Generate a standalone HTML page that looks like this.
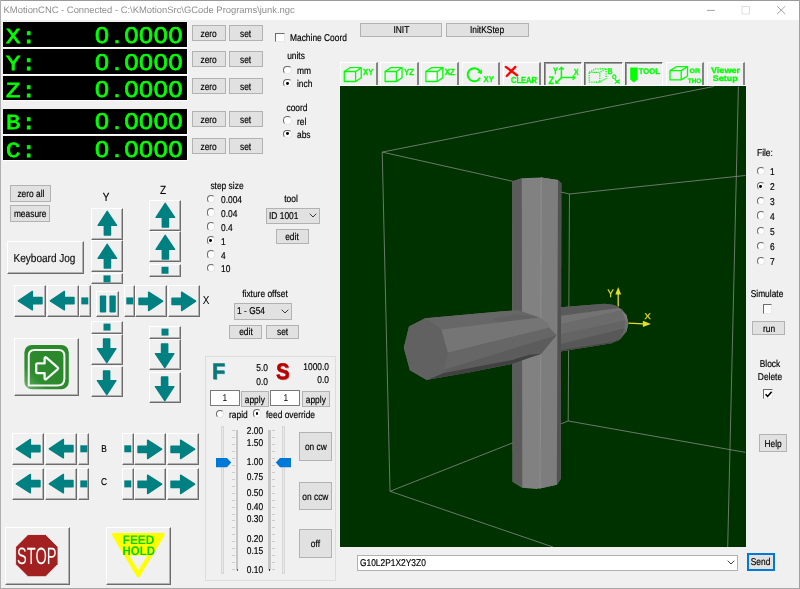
<!DOCTYPE html>
<html><head><meta charset="utf-8"><title>KMotionCNC</title>
<style>
html,body{margin:0;padding:0;background:#f0f0f0;}
body{width:800px;height:589px;overflow:hidden;background:#f0f0f0;position:relative;font-family:"Liberation Sans",sans-serif;font-size:8.4px;text-rendering:geometricPrecision;}
#w div{position:absolute;box-sizing:border-box;}
#w{position:absolute;left:0;top:0;width:800px;height:589px;overflow:hidden;will-change:transform;}
.t{white-space:pre;-webkit-text-stroke:0.18px currentColor;}
.b{background:#e1e1e1;border:1px solid #b2b2b2;text-align:center;white-space:pre;color:#000;-webkit-text-stroke:0.18px #000;}
.r{width:8.6px;height:8.6px;border-radius:50%;background:#fff;border:1px solid #e6e6e6;border-top-color:#6a6a6a;border-left-color:#6a6a6a;transform:rotate(0deg);}
.r i{position:absolute;left:1.9px;top:1.9px;width:2.8px;height:2.8px;border-radius:50%;background:#000;display:block;}
.c{width:9.6px;height:9.6px;background:#fff;border:1px solid #e8e8e8;border-top:1.3px solid #6c6c6c;border-left:1.3px solid #6c6c6c;}
.rb{background:#f0f0f0;border-top:1px solid #fff;border-left:1px solid #fff;border-right:1px solid #6c6c6c;border-bottom:1px solid #6c6c6c;box-shadow:inset -1px -1px 0 #b2b2b2;}
.sb{background:#f0f0f0;border-top:1px solid #6c6c6c;border-left:1px solid #6c6c6c;border-right:1px solid #fff;border-bottom:1px solid #fff;box-shadow:inset 1px 1px 0 #b2b2b2;}
.dro{background:#000;color:#00ff00;font-family:"Liberation Mono",monospace;font-weight:normal;-webkit-text-stroke:0.8px #00ff00;font-size:22.8px;letter-spacing:0.92px;white-space:pre;border-right:1px solid #fff;border-bottom:1px solid #fff;}
.num{position:absolute;left:91.9px;top:-1.3px;font-family:"Liberation Sans",sans-serif;font-size:22.4px;letter-spacing:0.67px;-webkit-text-stroke:0.7px #00ff00;transform:scale(1.12,1.02);transform-origin:0 100%;line-height:29.2px;}
.num span{display:inline-block;width:13.12px;text-align:center;letter-spacing:0;}
.s{display:inline-block;transform:scaleX(0.85);transform-origin:50% 50%;white-space:pre;}
.sl{display:inline-block;transform:scaleX(0.85);transform-origin:0 50%;white-space:pre;}
.ed{background:#fff;border:1px solid #7a7a7a;text-align:center;}
</style></head><body><div id="w">
<div style="left:0px;top:0px;width:800px;height:20px;background:#fff;"></div>
<div class="t" style="left:3.6px;top:3.6000000000000014px;line-height:12px;font-size:9.42px;color:#8e8e8e;transform-origin:0 50%;-webkit-text-stroke:0;">KMotionCNC - Connected - C:\KMotionSrc\GCode Programs\junk.ngc</div>
<svg width="100" height="20" viewBox="0 0 100 20" style="position:absolute;left:700px;top:0"><path d="M6.9 10.4 H14.8" stroke="#8c8c8c" stroke-width="0.8"/><rect x="42" y="6.5" width="7.5" height="7.5" fill="none" stroke="#d8d8d8" stroke-width="0.8"/><path d="M77.2 6.2 L85.2 14 M85.2 6.2 L77.2 14" stroke="#8a8a8a" stroke-width="0.8"/></svg>
<div class="dro" style="left:3px;top:22.3px;width:185px;height:25.599999999999998px;line-height:29.2px"><span style="position:absolute;left:3px;top:1.5px;font-size:21.4px;transform:scaleX(1.12);transform-origin:0 0">X:</span><span class="num">0<span>.</span>0000</span></div>
<div class="dro" style="left:3px;top:49.3px;width:185px;height:25.60000000000001px;line-height:29.2px"><span style="position:absolute;left:3px;top:1.5px;font-size:21.4px;transform:scaleX(1.12);transform-origin:0 0">Y:</span><span class="num">0<span>.</span>0000</span></div>
<div class="dro" style="left:3px;top:76.1px;width:185px;height:25.30000000000001px;line-height:29.2px"><span style="position:absolute;left:3px;top:1.5px;font-size:21.4px;transform:scaleX(1.12);transform-origin:0 0">Z:</span><span class="num">0<span>.</span>0000</span></div>
<div class="dro" style="left:3px;top:108.7px;width:185px;height:26.200000000000003px;line-height:29.2px"><span style="position:absolute;left:3px;top:1.5px;font-size:21.4px;transform:scaleX(1.12);transform-origin:0 0">B:</span><span class="num">0<span>.</span>0000</span></div>
<div class="dro" style="left:3px;top:136.1px;width:185px;height:24.900000000000006px;line-height:29.2px"><span style="position:absolute;left:3px;top:1.5px;font-size:21.4px;transform:scaleX(1.12);transform-origin:0 0">C:</span><span class="num">0<span>.</span>0000</span></div>
<div class="b" style="left:192px;top:25px;width:33.5px;height:16px;line-height:17.6px;font-size:9.88px;"><span class="s">zero</span></div>
<div class="b" style="left:229.3px;top:25px;width:33.5px;height:16px;line-height:17.6px;font-size:9.88px;"><span class="s">set</span></div>
<div class="b" style="left:192px;top:51.3px;width:33.5px;height:16px;line-height:17.6px;font-size:9.88px;"><span class="s">zero</span></div>
<div class="b" style="left:229.3px;top:51.3px;width:33.5px;height:16px;line-height:17.6px;font-size:9.88px;"><span class="s">set</span></div>
<div class="b" style="left:192px;top:78px;width:33.5px;height:16px;line-height:17.6px;font-size:9.88px;"><span class="s">zero</span></div>
<div class="b" style="left:229.3px;top:78px;width:33.5px;height:16px;line-height:17.6px;font-size:9.88px;"><span class="s">set</span></div>
<div class="b" style="left:192px;top:111.3px;width:33.5px;height:16px;line-height:17.6px;font-size:9.88px;"><span class="s">zero</span></div>
<div class="b" style="left:229.3px;top:111.3px;width:33.5px;height:16px;line-height:17.6px;font-size:9.88px;"><span class="s">set</span></div>
<div class="b" style="left:192px;top:138.3px;width:33.5px;height:16px;line-height:17.6px;font-size:9.88px;"><span class="s">zero</span></div>
<div class="b" style="left:229.3px;top:138.3px;width:33.5px;height:16px;line-height:17.6px;font-size:9.88px;"><span class="s">set</span></div>
<div class="c" style="left:275.2px;top:32.5px"></div>
<div class="t" style="left:289.5px;top:32.599999999999994px;line-height:12px;font-size:9.88px;color:#000;transform-origin:0 50%;transform:scaleX(0.85);">Machine Coord</div>
<div class="t" style="left:195.5px;width:200px;text-align:center;top:51.3px;line-height:12px;font-size:9.88px;color:#000;transform-origin:50% 50%;transform:scaleX(0.85);">units</div>
<div class="r" style="left:283.2px;top:65.7px"></div>
<div class="t" style="left:297px;top:66.1px;line-height:12px;font-size:9.88px;color:#000;transform-origin:0 50%;transform:scaleX(0.85);">mm</div>
<div class="r" style="left:283.2px;top:78.9px"><i></i></div>
<div class="t" style="left:297px;top:79.39999999999999px;line-height:12px;font-size:9.88px;color:#000;transform-origin:0 50%;transform:scaleX(0.85);">inch</div>
<div class="t" style="left:196.8px;width:200px;text-align:center;top:102.6px;line-height:12px;font-size:9.88px;color:#000;transform-origin:50% 50%;transform:scaleX(0.85);">coord</div>
<div class="r" style="left:283.2px;top:116.2px"></div>
<div class="t" style="left:297px;top:116.6px;line-height:12px;font-size:9.88px;color:#000;transform-origin:0 50%;transform:scaleX(0.85);">rel</div>
<div class="r" style="left:283.2px;top:129.5px"><i></i></div>
<div class="t" style="left:297px;top:129.9px;line-height:12px;font-size:9.88px;color:#000;transform-origin:0 50%;transform:scaleX(0.85);">abs</div>
<div class="b" style="left:360px;top:23.2px;width:82.4px;height:13.8px;line-height:14.6px;font-size:9.88px;"><span class="s">INIT</span></div>
<div class="b" style="left:446.3px;top:23.2px;width:82.3px;height:13.8px;line-height:14.6px;font-size:9.88px;"><span class="s">InitKStep</span></div>
<div class="b" style="left:10px;top:185px;width:41px;height:16.5px;line-height:18.1px;font-size:9.88px;"><span class="s">zero all</span></div>
<div class="b" style="left:10px;top:205px;width:40px;height:16.8px;line-height:18.400000000000002px;font-size:9.88px;"><span class="s">measure</span></div>
<div class="rb" style="left:7px;top:241px;width:76.8px;height:33px"><div class="t" style="left:-1.2px;top:0.7px;width:75px;height:31px;line-height:31px;text-align:center;font-size:11.6px;color:#111;transform:scaleX(0.865)">Keyboard Jog</div></div>
<div class="t" style="left:6px;width:200px;text-align:center;top:192.3px;line-height:12px;font-size:11.76px;color:#000;transform-origin:50% 50%;transform:scaleX(0.85);">Y</div>
<div class="t" style="left:62.80000000000001px;width:200px;text-align:center;top:185.0px;line-height:12px;font-size:11.76px;color:#000;transform-origin:50% 50%;transform:scaleX(0.85);">Z</div>
<div class="rb" style="left:91px;top:207.5px;width:32px;height:32px"><svg width="30" height="30" viewBox="0 0 30 30" style="position:absolute;left:0.0px;top:-0.2px;overflow:visible"><g transform="rotate(0 15 15)"><path d="M15.2 3.3 L24.6 17.4 L18.5 17.4 L18.5 27 L12.3 27 L12.3 17.4 L6.1 17.4 Z" fill="#008080" stroke="#008080" stroke-width="1.4" stroke-linejoin="round"/></g></svg></div>
<div class="rb" style="left:91px;top:240.4px;width:32px;height:31.6px"><svg width="30" height="30" viewBox="0 0 30 30" style="position:absolute;left:0.0px;top:-0.4px;overflow:visible"><g transform="rotate(0 15 15)"><path d="M15.2 3.3 L24.6 17.4 L18.5 17.4 L18.5 27 L12.3 27 L12.3 17.4 L6.1 17.4 Z" fill="#008080" stroke="#008080" stroke-width="1.4" stroke-linejoin="round"/></g></svg></div>
<div class="rb" style="left:91px;top:272.5px;width:32px;height:11.8px"><svg width="30" height="9.8" viewBox="0 0 30 9.8" style="position:absolute;left:0;top:0"><rect x="11.5" y="1.4000000000000004" width="7" height="7" fill="#008080"/></svg></div>
<div class="rb" style="left:91px;top:321.4px;width:32px;height:12.2px"><svg width="30" height="10.2" viewBox="0 0 30 10.2" style="position:absolute;left:0;top:0"><rect x="11.5" y="1.5999999999999996" width="7" height="7" fill="#008080"/></svg></div>
<div class="rb" style="left:91px;top:334.4px;width:32px;height:30.6px"><svg width="30" height="30" viewBox="0 0 30 30" style="position:absolute;left:0.0px;top:0.7px;overflow:visible"><g transform="rotate(180 15 15)"><path d="M15.2 3.3 L24.6 17.4 L18.5 17.4 L18.5 27 L12.3 27 L12.3 17.4 L6.1 17.4 Z" fill="#008080" stroke="#008080" stroke-width="1.4" stroke-linejoin="round"/></g></svg></div>
<div class="rb" style="left:91px;top:365.8px;width:32px;height:31.4px"><svg width="30" height="30" viewBox="0 0 30 30" style="position:absolute;left:0.0px;top:1.1px;overflow:visible"><g transform="rotate(180 15 15)"><path d="M15.2 3.3 L24.6 17.4 L18.5 17.4 L18.5 27 L12.3 27 L12.3 17.4 L6.1 17.4 Z" fill="#008080" stroke="#008080" stroke-width="1.4" stroke-linejoin="round"/></g></svg></div>
<div class="rb" style="left:149px;top:200.3px;width:32px;height:30.5px"><svg width="30" height="30" viewBox="0 0 30 30" style="position:absolute;left:0.0px;top:-0.95px;overflow:visible"><g transform="rotate(0 15 15)"><path d="M15.2 3.3 L24.6 17.4 L18.5 17.4 L18.5 27 L12.3 27 L12.3 17.4 L6.1 17.4 Z" fill="#008080" stroke="#008080" stroke-width="1.4" stroke-linejoin="round"/></g></svg></div>
<div class="rb" style="left:149px;top:231.2px;width:32px;height:31px"><svg width="30" height="30" viewBox="0 0 30 30" style="position:absolute;left:0.0px;top:-0.7px;overflow:visible"><g transform="rotate(0 15 15)"><path d="M15.2 3.3 L24.6 17.4 L18.5 17.4 L18.5 27 L12.3 27 L12.3 17.4 L6.1 17.4 Z" fill="#008080" stroke="#008080" stroke-width="1.4" stroke-linejoin="round"/></g></svg></div>
<div class="rb" style="left:149px;top:264px;width:32px;height:12.5px"><svg width="30" height="10.5" viewBox="0 0 30 10.5" style="position:absolute;left:0;top:0"><rect x="11.5" y="1.75" width="7" height="7" fill="#008080"/></svg></div>
<div class="rb" style="left:149px;top:326.4px;width:32px;height:12.2px"><svg width="30" height="10.2" viewBox="0 0 30 10.2" style="position:absolute;left:0;top:0"><rect x="11.5" y="1.5999999999999996" width="7" height="7" fill="#008080"/></svg></div>
<div class="rb" style="left:149px;top:339.4px;width:32px;height:31px"><svg width="30" height="30" viewBox="0 0 30 30" style="position:absolute;left:0.0px;top:0.9px;overflow:visible"><g transform="rotate(180 15 15)"><path d="M15.2 3.3 L24.6 17.4 L18.5 17.4 L18.5 27 L12.3 27 L12.3 17.4 L6.1 17.4 Z" fill="#008080" stroke="#008080" stroke-width="1.4" stroke-linejoin="round"/></g></svg></div>
<div class="rb" style="left:149px;top:371.8px;width:32px;height:31.4px"><svg width="30" height="30" viewBox="0 0 30 30" style="position:absolute;left:0.0px;top:1.1px;overflow:visible"><g transform="rotate(180 15 15)"><path d="M15.2 3.3 L24.6 17.4 L18.5 17.4 L18.5 27 L12.3 27 L12.3 17.4 L6.1 17.4 Z" fill="#008080" stroke="#008080" stroke-width="1.4" stroke-linejoin="round"/></g></svg></div>
<div class="rb" style="left:14px;top:285px;width:32px;height:31.8px"><svg width="30" height="30" viewBox="0 0 30 30" style="position:absolute;left:-0.4px;top:-0.1px;overflow:visible"><g transform="rotate(-90 15 15)"><path d="M15.2 3.3 L24.6 17.4 L18.5 17.4 L18.5 27 L12.3 27 L12.3 17.4 L6.1 17.4 Z" fill="#008080" stroke="#008080" stroke-width="1.4" stroke-linejoin="round"/></g></svg></div>
<div class="rb" style="left:46.7px;top:285px;width:32px;height:31.8px"><svg width="30" height="30" viewBox="0 0 30 30" style="position:absolute;left:-0.4px;top:-0.1px;overflow:visible"><g transform="rotate(-90 15 15)"><path d="M15.2 3.3 L24.6 17.4 L18.5 17.4 L18.5 27 L12.3 27 L12.3 17.4 L6.1 17.4 Z" fill="#008080" stroke="#008080" stroke-width="1.4" stroke-linejoin="round"/></g></svg></div>
<div class="rb" style="left:79.3px;top:285px;width:11.6px;height:31.8px"><svg width="9.6" height="29.8" viewBox="0 0 9.6 29.8" style="position:absolute;left:0;top:0"><rect x="1.2999999999999998" y="11.4" width="7" height="7" fill="#008080"/></svg></div>
<div class="rb" style="left:123.7px;top:285px;width:11.6px;height:31.8px"><svg width="9.6" height="29.8" viewBox="0 0 9.6 29.8" style="position:absolute;left:0;top:0"><rect x="1.2999999999999998" y="11.4" width="7" height="7" fill="#008080"/></svg></div>
<div class="rb" style="left:135.4px;top:285px;width:32px;height:31.8px"><svg width="30" height="30" viewBox="0 0 30 30" style="position:absolute;left:0.0px;top:-0.1px;overflow:visible"><g transform="rotate(90 15 15)"><path d="M15.2 3.3 L24.6 17.4 L18.5 17.4 L18.5 27 L12.3 27 L12.3 17.4 L6.1 17.4 Z" fill="#008080" stroke="#008080" stroke-width="1.4" stroke-linejoin="round"/></g></svg></div>
<div class="rb" style="left:167.8px;top:285px;width:32px;height:31.8px"><svg width="30" height="30" viewBox="0 0 30 30" style="position:absolute;left:0.0px;top:-0.1px;overflow:visible"><g transform="rotate(90 15 15)"><path d="M15.2 3.3 L24.6 17.4 L18.5 17.4 L18.5 27 L12.3 27 L12.3 17.4 L6.1 17.4 Z" fill="#008080" stroke="#008080" stroke-width="1.4" stroke-linejoin="round"/></g></svg></div>
<div class="rb" style="left:95.6px;top:290.6px;width:23.4px;height:26px"><svg width="23" height="24" viewBox="0 0 23 24" style="position:absolute;left:0;top:0"><rect x="2.8" y="3.4" width="6.4" height="17" rx="0.8" fill="#008080"/><rect x="12.4" y="3.4" width="6.4" height="17" rx="0.8" fill="#008080"/></svg></div>
<div class="t" style="left:105.6px;width:200px;text-align:center;top:294.6px;line-height:12px;font-size:11.76px;color:#000;transform-origin:50% 50%;transform:scaleX(0.85);-webkit-text-stroke:0;">X</div>
<div class="rb" style="left:12px;top:433.2px;width:32px;height:31.6px"><svg width="30" height="30" viewBox="0 0 30 30" style="position:absolute;left:-0.4px;top:-0.2px;overflow:visible"><g transform="rotate(-90 15 15)"><path d="M15.2 3.3 L24.6 17.4 L18.5 17.4 L18.5 27 L12.3 27 L12.3 17.4 L6.1 17.4 Z" fill="#008080" stroke="#008080" stroke-width="1.4" stroke-linejoin="round"/></g></svg></div>
<div class="rb" style="left:45px;top:433.2px;width:32px;height:31.6px"><svg width="30" height="30" viewBox="0 0 30 30" style="position:absolute;left:-0.4px;top:-0.2px;overflow:visible"><g transform="rotate(-90 15 15)"><path d="M15.2 3.3 L24.6 17.4 L18.5 17.4 L18.5 27 L12.3 27 L12.3 17.4 L6.1 17.4 Z" fill="#008080" stroke="#008080" stroke-width="1.4" stroke-linejoin="round"/></g></svg></div>
<div class="rb" style="left:77.5px;top:433.2px;width:11.6px;height:31.6px"><svg width="9.6" height="29.6" viewBox="0 0 9.6 29.6" style="position:absolute;left:0;top:0"><rect x="1.2999999999999998" y="11.3" width="7" height="7" fill="#008080"/></svg></div>
<div class="rb" style="left:122.3px;top:433.2px;width:11.6px;height:31.6px"><svg width="9.6" height="29.6" viewBox="0 0 9.6 29.6" style="position:absolute;left:0;top:0"><rect x="1.2999999999999998" y="11.3" width="7" height="7" fill="#008080"/></svg></div>
<div class="rb" style="left:134px;top:433.2px;width:32px;height:31.6px"><svg width="30" height="30" viewBox="0 0 30 30" style="position:absolute;left:0.0px;top:-0.2px;overflow:visible"><g transform="rotate(90 15 15)"><path d="M15.2 3.3 L24.6 17.4 L18.5 17.4 L18.5 27 L12.3 27 L12.3 17.4 L6.1 17.4 Z" fill="#008080" stroke="#008080" stroke-width="1.4" stroke-linejoin="round"/></g></svg></div>
<div class="rb" style="left:166.5px;top:433.2px;width:32px;height:31.6px"><svg width="30" height="30" viewBox="0 0 30 30" style="position:absolute;left:0.0px;top:-0.2px;overflow:visible"><g transform="rotate(90 15 15)"><path d="M15.2 3.3 L24.6 17.4 L18.5 17.4 L18.5 27 L12.3 27 L12.3 17.4 L6.1 17.4 Z" fill="#008080" stroke="#008080" stroke-width="1.4" stroke-linejoin="round"/></g></svg></div>
<div class="rb" style="left:12px;top:467.9px;width:32px;height:31.8px"><svg width="30" height="30" viewBox="0 0 30 30" style="position:absolute;left:-0.4px;top:-0.1px;overflow:visible"><g transform="rotate(-90 15 15)"><path d="M15.2 3.3 L24.6 17.4 L18.5 17.4 L18.5 27 L12.3 27 L12.3 17.4 L6.1 17.4 Z" fill="#008080" stroke="#008080" stroke-width="1.4" stroke-linejoin="round"/></g></svg></div>
<div class="rb" style="left:45px;top:467.9px;width:32px;height:31.8px"><svg width="30" height="30" viewBox="0 0 30 30" style="position:absolute;left:-0.4px;top:-0.1px;overflow:visible"><g transform="rotate(-90 15 15)"><path d="M15.2 3.3 L24.6 17.4 L18.5 17.4 L18.5 27 L12.3 27 L12.3 17.4 L6.1 17.4 Z" fill="#008080" stroke="#008080" stroke-width="1.4" stroke-linejoin="round"/></g></svg></div>
<div class="rb" style="left:77.5px;top:467.9px;width:11.6px;height:31.8px"><svg width="9.6" height="29.8" viewBox="0 0 9.6 29.8" style="position:absolute;left:0;top:0"><rect x="1.2999999999999998" y="11.4" width="7" height="7" fill="#008080"/></svg></div>
<div class="rb" style="left:122.3px;top:467.9px;width:11.6px;height:31.8px"><svg width="9.6" height="29.8" viewBox="0 0 9.6 29.8" style="position:absolute;left:0;top:0"><rect x="1.2999999999999998" y="11.4" width="7" height="7" fill="#008080"/></svg></div>
<div class="rb" style="left:134px;top:467.9px;width:32px;height:31.8px"><svg width="30" height="30" viewBox="0 0 30 30" style="position:absolute;left:0.0px;top:-0.1px;overflow:visible"><g transform="rotate(90 15 15)"><path d="M15.2 3.3 L24.6 17.4 L18.5 17.4 L18.5 27 L12.3 27 L12.3 17.4 L6.1 17.4 Z" fill="#008080" stroke="#008080" stroke-width="1.4" stroke-linejoin="round"/></g></svg></div>
<div class="rb" style="left:166.5px;top:467.9px;width:32px;height:31.8px"><svg width="30" height="30" viewBox="0 0 30 30" style="position:absolute;left:0.0px;top:-0.1px;overflow:visible"><g transform="rotate(90 15 15)"><path d="M15.2 3.3 L24.6 17.4 L18.5 17.4 L18.5 27 L12.3 27 L12.3 17.4 L6.1 17.4 Z" fill="#008080" stroke="#008080" stroke-width="1.4" stroke-linejoin="round"/></g></svg></div>
<div class="t" style="left:4px;width:200px;text-align:center;top:443.6px;line-height:12px;font-size:9.88px;color:#000;transform-origin:50% 50%;transform:scaleX(0.85);">B</div>
<div class="t" style="left:4px;width:200px;text-align:center;top:476.8px;line-height:12px;font-size:9.88px;color:#000;transform-origin:50% 50%;transform:scaleX(0.85);">C</div>
<div class="rb" style="left:14px;top:337.5px;width:64.8px;height:58.6px"><svg width="63" height="57" viewBox="0 0 63 57" style="position:absolute;left:0;top:0">
<defs><linearGradient id="gg" x1="0" y1="1" x2="0.6" y2="0.4"><stop offset="0" stop-color="#6fb56f"/><stop offset="0.45" stop-color="#2f8c2f"/><stop offset="1" stop-color="#2a892a"/></linearGradient></defs>
<rect x="9.4" y="5.9" width="44.4" height="44.4" rx="7.5" fill="url(#gg)"/>
<path d="M19.5 10.9 H43.6 Q49.4 10.9 49.4 16.7 V39.5 Q49.4 46.5 42.4 46.5 H13.75 V16.7 Q13.75 10.9 19.5 10.9 Z" fill="none" stroke="#f6f6f6" stroke-width="2"/>
<path d="M22.2 24.4 H29.6 V19.2 Q29.9 17.6 31.4 18.6 L42.6 28.3 Q43.6 29.3 42.6 30.3 L31.4 40 Q29.9 41 29.6 39.4 V34.2 H22.2 Q21.2 34 21.2 33 V25.6 Q21.2 24.5 22.2 24.4 Z" fill="none" stroke="#f6f6f6" stroke-width="2.3" stroke-linejoin="round"/>
</svg></div>
<div class="rb" style="left:5.2px;top:526.7px;width:64.6px;height:58px"><svg width="64.6" height="58" viewBox="6.2 527.7 64.6 58" style="position:absolute;left:0;top:0"><polygon points="28.2,534.2 45.8,534.2 58.2,546.6 58.2,564 45.8,576.4 28.2,576.4 15.8,564 15.8,546.6" fill="#a32020" stroke="#f8f8f8" stroke-width="0.8"/>
<text x="17.3" y="563.3" font-family="Liberation Sans, sans-serif" font-size="23.5" fill="#fff" textLength="39.4" lengthAdjust="spacingAndGlyphs">STOP</text></svg></div>
<div class="rb" style="left:106.1px;top:526.7px;width:64.6px;height:58px"><svg width="64.6" height="58" viewBox="107.1 527.7 64.6 58" style="position:absolute;left:0;top:0"><path d="M113.6 534.4 H163.2 L138.4 575.6 Z" fill="#ffff00" stroke="#ffff00" stroke-width="3.2" stroke-linejoin="round"/>
<path d="M129.3 555.2 H147.5 L138.4 570 Z" fill="#f0f0f0"/>
<text x="122.8" y="543.9" font-family="Liberation Sans, sans-serif" font-weight="bold" font-size="12.4" fill="#00d400" textLength="31.6" lengthAdjust="spacingAndGlyphs">FEED</text>
<text x="122.6" y="554.9" font-family="Liberation Sans, sans-serif" font-weight="bold" font-size="12.4" fill="#00d400" textLength="32.4" lengthAdjust="spacingAndGlyphs">HOLD</text></svg></div>
<div class="t" style="left:127px;width:200px;text-align:center;top:180.8px;line-height:12px;font-size:9.88px;color:#000;transform-origin:50% 50%;transform:scaleX(0.85);">step size</div>
<div class="r" style="left:206.5px;top:194.5px"></div>
<div class="t" style="left:220.5px;top:194.90000000000003px;line-height:12px;font-size:9.88px;color:#000;transform-origin:0 50%;transform:scaleX(0.85);">0.004</div>
<div class="r" style="left:206.5px;top:208.29999999999998px"></div>
<div class="t" style="left:220.5px;top:208.70000000000002px;line-height:12px;font-size:9.88px;color:#000;transform-origin:0 50%;transform:scaleX(0.85);">0.04</div>
<div class="r" style="left:206.5px;top:222.29999999999998px"></div>
<div class="t" style="left:220.5px;top:222.70000000000002px;line-height:12px;font-size:9.88px;color:#000;transform-origin:0 50%;transform:scaleX(0.85);">0.4</div>
<div class="r" style="left:206.5px;top:236.29999999999998px"><i></i></div>
<div class="t" style="left:220.5px;top:236.70000000000002px;line-height:12px;font-size:9.88px;color:#000;transform-origin:0 50%;transform:scaleX(0.85);">1</div>
<div class="r" style="left:206.5px;top:250.1px"></div>
<div class="t" style="left:220.5px;top:250.5px;line-height:12px;font-size:9.88px;color:#000;transform-origin:0 50%;transform:scaleX(0.85);">4</div>
<div class="r" style="left:206.5px;top:263.7px"></div>
<div class="t" style="left:220.5px;top:264.1px;line-height:12px;font-size:9.88px;color:#000;transform-origin:0 50%;transform:scaleX(0.85);">10</div>
<div class="t" style="left:191.3px;width:200px;text-align:center;top:193.60000000000002px;line-height:12px;font-size:9.88px;color:#000;transform-origin:50% 50%;transform:scaleX(0.85);">tool</div>
<div class="b" style="left:266.3px;top:207.5px;width:54px;height:16.5px;line-height:16.5px;font-size:9.88px;text-align:left;padding-left:2px;background:#e1e1e1;"><span class="sl">ID 1001</span><svg width="8" height="5" viewBox="0 0 8 5" style="position:absolute;right:2.2px;top:4.95px"><path d="M0.7 0.7 L4 4 L7.3 0.7" fill="none" stroke="#3c3c3c" stroke-width="1"/></svg></div>
<div class="b" style="left:276px;top:229px;width:32.6px;height:14.5px;line-height:16.1px;font-size:9.88px;"><span class="s">edit</span></div>
<div class="t" style="left:165px;width:200px;text-align:center;top:289.0px;line-height:12px;font-size:9.88px;color:#000;transform-origin:50% 50%;transform:scaleX(0.85);">fixture offset</div>
<div class="b" style="left:234px;top:303.3px;width:58.2px;height:16.7px;line-height:16.7px;font-size:9.88px;text-align:left;padding-left:1.8px;background:#e1e1e1;"><span class="sl">1 - G54</span><svg width="8" height="5" viewBox="0 0 8 5" style="position:absolute;right:2px;top:5.05px"><path d="M0.7 0.7 L4 4 L7.3 0.7" fill="none" stroke="#3c3c3c" stroke-width="1"/></svg></div>
<div class="b" style="left:229.2px;top:324.5px;width:32.6px;height:14px;line-height:14.0px;font-size:9.88px;"><span class="s">edit</span></div>
<div class="b" style="left:266.4px;top:324.5px;width:32.9px;height:14px;line-height:14.0px;font-size:9.88px;"><span class="s">set</span></div>
<div style="left:205.3px;top:356.1px;width:130.3px;height:224.6px;border:1px solid #dddddd;"></div>
<div class="t" style="left:212.2px;top:357.7px;font-size:22.6px;font-weight:bold;color:#0a7878;-webkit-text-stroke:0.5px #0a7878;line-height:28px;text-shadow:0.7px 0.7px 0.6px #8bb;transform:scaleX(0.96);transform-origin:0 0">F</div>
<div class="t" style="left:275.6px;top:357.7px;font-size:22.6px;font-weight:bold;color:#b80000;-webkit-text-stroke:0.5px #b80000;line-height:28px;text-shadow:0.7px 0.7px 0.6px #c88;transform:scaleX(0.9);transform-origin:0 0">S</div>
<div class="t" style="left:68px;width:200px;text-align:right;top:363.1px;line-height:12px;font-size:9.88px;color:#000;transform-origin:100% 50%;transform:scaleX(0.85);">5.0</div>
<div class="t" style="left:68px;width:200px;text-align:right;top:377.1px;line-height:12px;font-size:9.88px;color:#000;transform-origin:100% 50%;transform:scaleX(0.85);">0.0</div>
<div class="t" style="left:128.8px;width:200px;text-align:right;top:362.3px;line-height:12px;font-size:9.88px;color:#000;transform-origin:100% 50%;transform:scaleX(0.85);">1000.0</div>
<div class="t" style="left:128.8px;width:200px;text-align:right;top:375.3px;line-height:12px;font-size:9.88px;color:#000;transform-origin:100% 50%;transform:scaleX(0.85);">0.0</div>
<div class="ed" style="left:210px;top:390.3px;width:29.8px;height:16px;line-height:16.3px;font-size:9.88px;"><span class="s">1</span></div>
<div class="b" style="left:241.2px;top:390.5px;width:27.6px;height:16px;line-height:17.6px;font-size:9.88px;"><span class="s">apply</span></div>
<div class="ed" style="left:270.4px;top:390.3px;width:29.8px;height:16px;line-height:16.3px;font-size:9.88px;"><span class="s">1</span></div>
<div class="b" style="left:302px;top:390.5px;width:28px;height:16px;line-height:17.6px;font-size:9.88px;"><span class="s">apply</span></div>
<div class="r" style="left:215.7px;top:409.5px"></div>
<div class="t" style="left:229px;top:409.6px;line-height:12px;font-size:9.88px;color:#000;transform-origin:0 50%;transform:scaleX(0.85);">rapid</div>
<div class="r" style="left:252.7px;top:409.3px"><i></i></div>
<div class="t" style="left:266px;top:409.6px;line-height:12px;font-size:9.88px;color:#000;transform-origin:0 50%;transform:scaleX(0.85);">feed override</div>
<div style="left:221.1px;top:426px;width:2.8px;height:147.5px;background:#e9e9e9;border:0.6px solid #d6d6d6;"></div>
<div style="left:282.4px;top:426px;width:2.8px;height:147.5px;background:#e9e9e9;border:0.6px solid #d6d6d6;"></div>
<div style="left:236.2px;top:429.7px;width:2.3px;height:140.6px;background:#c6c6c6;"></div>
<div style="left:268.4px;top:429.7px;width:2.3px;height:140.6px;background:#c6c6c6;"></div>
<div style="left:231.8px;top:430.0px;width:2.8px;height:0.8px;background:#cccccc;"></div>
<div style="left:272.2px;top:430.0px;width:2.8px;height:0.8px;background:#cccccc;"></div>
<div style="left:231.8px;top:436.96000000000004px;width:2.8px;height:0.8px;background:#cccccc;"></div>
<div style="left:272.2px;top:436.96000000000004px;width:2.8px;height:0.8px;background:#cccccc;"></div>
<div style="left:231.8px;top:443.92px;width:2.8px;height:0.8px;background:#cccccc;"></div>
<div style="left:272.2px;top:443.92px;width:2.8px;height:0.8px;background:#cccccc;"></div>
<div style="left:231.8px;top:450.88px;width:2.8px;height:0.8px;background:#cccccc;"></div>
<div style="left:272.2px;top:450.88px;width:2.8px;height:0.8px;background:#cccccc;"></div>
<div style="left:231.8px;top:457.84000000000003px;width:2.8px;height:0.8px;background:#cccccc;"></div>
<div style="left:272.2px;top:457.84000000000003px;width:2.8px;height:0.8px;background:#cccccc;"></div>
<div style="left:231.8px;top:464.8px;width:2.8px;height:0.8px;background:#cccccc;"></div>
<div style="left:272.2px;top:464.8px;width:2.8px;height:0.8px;background:#cccccc;"></div>
<div style="left:231.8px;top:471.76000000000005px;width:2.8px;height:0.8px;background:#cccccc;"></div>
<div style="left:272.2px;top:471.76000000000005px;width:2.8px;height:0.8px;background:#cccccc;"></div>
<div style="left:231.8px;top:478.72px;width:2.8px;height:0.8px;background:#cccccc;"></div>
<div style="left:272.2px;top:478.72px;width:2.8px;height:0.8px;background:#cccccc;"></div>
<div style="left:231.8px;top:485.68px;width:2.8px;height:0.8px;background:#cccccc;"></div>
<div style="left:272.2px;top:485.68px;width:2.8px;height:0.8px;background:#cccccc;"></div>
<div style="left:231.8px;top:492.64000000000004px;width:2.8px;height:0.8px;background:#cccccc;"></div>
<div style="left:272.2px;top:492.64000000000004px;width:2.8px;height:0.8px;background:#cccccc;"></div>
<div style="left:231.8px;top:499.6px;width:2.8px;height:0.8px;background:#cccccc;"></div>
<div style="left:272.2px;top:499.6px;width:2.8px;height:0.8px;background:#cccccc;"></div>
<div style="left:231.8px;top:506.56px;width:2.8px;height:0.8px;background:#cccccc;"></div>
<div style="left:272.2px;top:506.56px;width:2.8px;height:0.8px;background:#cccccc;"></div>
<div style="left:231.8px;top:513.52px;width:2.8px;height:0.8px;background:#cccccc;"></div>
<div style="left:272.2px;top:513.52px;width:2.8px;height:0.8px;background:#cccccc;"></div>
<div style="left:231.8px;top:520.48px;width:2.8px;height:0.8px;background:#cccccc;"></div>
<div style="left:272.2px;top:520.48px;width:2.8px;height:0.8px;background:#cccccc;"></div>
<div style="left:231.8px;top:527.44px;width:2.8px;height:0.8px;background:#cccccc;"></div>
<div style="left:272.2px;top:527.44px;width:2.8px;height:0.8px;background:#cccccc;"></div>
<div style="left:231.8px;top:534.4px;width:2.8px;height:0.8px;background:#cccccc;"></div>
<div style="left:272.2px;top:534.4px;width:2.8px;height:0.8px;background:#cccccc;"></div>
<div style="left:231.8px;top:541.36px;width:2.8px;height:0.8px;background:#cccccc;"></div>
<div style="left:272.2px;top:541.36px;width:2.8px;height:0.8px;background:#cccccc;"></div>
<div style="left:231.8px;top:548.32px;width:2.8px;height:0.8px;background:#cccccc;"></div>
<div style="left:272.2px;top:548.32px;width:2.8px;height:0.8px;background:#cccccc;"></div>
<div style="left:231.8px;top:555.28px;width:2.8px;height:0.8px;background:#cccccc;"></div>
<div style="left:272.2px;top:555.28px;width:2.8px;height:0.8px;background:#cccccc;"></div>
<div style="left:231.8px;top:562.24px;width:2.8px;height:0.8px;background:#cccccc;"></div>
<div style="left:272.2px;top:562.24px;width:2.8px;height:0.8px;background:#cccccc;"></div>
<div style="left:231.8px;top:569.2px;width:2.8px;height:0.8px;background:#cccccc;"></div>
<div style="left:272.2px;top:569.2px;width:2.8px;height:0.8px;background:#cccccc;"></div>
<div style="left:236.5px;top:569.3px;width:1.8px;height:1.8px;background:#008080;"></div>
<div style="left:268.7px;top:569.3px;width:1.8px;height:1.8px;background:#c00000;"></div>
<svg width="16" height="10" viewBox="0 0 16 10" style="position:absolute;left:216px;top:457.8px"><path d="M0 0 H11 L15.2 4.6 L11 9.2 H0 Z" fill="#0078d7"/></svg>
<svg width="16" height="10" viewBox="0 0 16 10" style="position:absolute;left:275px;top:457.8px"><path d="M16 0 H5 L0.8 4.6 L5 9.2 H16 Z" fill="#0078d7"/></svg>
<div class="t" style="left:154.8px;width:200px;text-align:center;top:425.7px;line-height:12px;font-size:9.88px;color:#000;transform-origin:50% 50%;transform:scaleX(0.85);">2.00</div>
<div class="t" style="left:154.8px;width:200px;text-align:center;top:437.8px;line-height:12px;font-size:9.88px;color:#000;transform-origin:50% 50%;transform:scaleX(0.85);">1.50</div>
<div class="t" style="left:154.8px;width:200px;text-align:center;top:457.0px;line-height:12px;font-size:9.88px;color:#000;transform-origin:50% 50%;transform:scaleX(0.85);">1.00</div>
<div class="t" style="left:154.8px;width:200px;text-align:center;top:471.9px;line-height:12px;font-size:9.88px;color:#000;transform-origin:50% 50%;transform:scaleX(0.85);">0.75</div>
<div class="t" style="left:154.8px;width:200px;text-align:center;top:487.6px;line-height:12px;font-size:9.88px;color:#000;transform-origin:50% 50%;transform:scaleX(0.85);">0.50</div>
<div class="t" style="left:154.8px;width:200px;text-align:center;top:501.5px;line-height:12px;font-size:9.88px;color:#000;transform-origin:50% 50%;transform:scaleX(0.85);">0.40</div>
<div class="t" style="left:154.8px;width:200px;text-align:center;top:514.3px;line-height:12px;font-size:9.88px;color:#000;transform-origin:50% 50%;transform:scaleX(0.85);">0.30</div>
<div class="t" style="left:154.8px;width:200px;text-align:center;top:533.9px;line-height:12px;font-size:9.88px;color:#000;transform-origin:50% 50%;transform:scaleX(0.85);">0.20</div>
<div class="t" style="left:154.8px;width:200px;text-align:center;top:546.3px;line-height:12px;font-size:9.88px;color:#000;transform-origin:50% 50%;transform:scaleX(0.85);">0.15</div>
<div class="t" style="left:154.8px;width:200px;text-align:center;top:565.0px;line-height:12px;font-size:9.88px;color:#000;transform-origin:50% 50%;transform:scaleX(0.85);">0.10</div>
<div class="b" style="left:299.2px;top:432px;width:32.6px;height:28.6px;line-height:30.200000000000003px;font-size:9.88px;"><span class="s">on cw</span></div>
<div class="b" style="left:299.2px;top:481.6px;width:32.6px;height:28.5px;line-height:30.1px;font-size:9.88px;"><span class="s">on ccw</span></div>
<div class="b" style="left:299.2px;top:529.4px;width:32.6px;height:28.4px;line-height:30.0px;font-size:9.88px;"><span class="s">off</span></div>
<div style="left:339.5px;top:62.3px;width:38.3px;height:24.2px;background:#f0f0f0;border-top:1px solid #fff;border-left:1px solid #fff;border-right:2px solid #848484;"></div>
<div style="left:380.3px;top:62.3px;width:38.3px;height:24.2px;background:#f0f0f0;border-top:1px solid #fff;border-left:1px solid #fff;border-right:2px solid #848484;"></div>
<div style="left:421.1px;top:62.3px;width:38.3px;height:24.2px;background:#f0f0f0;border-top:1px solid #fff;border-left:1px solid #fff;border-right:2px solid #848484;"></div>
<div style="left:461.9px;top:62.3px;width:38.3px;height:24.2px;background:#f0f0f0;border-top:1px solid #fff;border-left:1px solid #fff;border-right:2px solid #848484;"></div>
<div style="left:502.7px;top:62.3px;width:38.3px;height:24.2px;background:#f0f0f0;border-top:1px solid #fff;border-left:1px solid #fff;border-right:2px solid #848484;"></div>
<div style="left:543.5px;top:62.3px;width:38.3px;height:24.2px;background:#f0f0f0;border-top:1px solid #6c6c6c;border-left:1px solid #6c6c6c;border-right:1px solid #fff;box-shadow:inset 1px 1px 0 #9a9a9a;"></div>
<div style="left:584.3px;top:62.3px;width:38.3px;height:24.2px;background:#f0f0f0;border-top:1px solid #6c6c6c;border-left:1px solid #6c6c6c;border-right:1px solid #fff;box-shadow:inset 1px 1px 0 #9a9a9a;"></div>
<div style="left:625.0999999999999px;top:62.3px;width:38.3px;height:24.2px;background:#f0f0f0;border-top:1px solid #6c6c6c;border-left:1px solid #6c6c6c;border-right:1px solid #fff;box-shadow:inset 1px 1px 0 #9a9a9a;"></div>
<div style="left:665.9px;top:62.3px;width:38.3px;height:24.2px;background:#f0f0f0;border-top:1px solid #fff;border-left:1px solid #fff;border-right:2px solid #848484;"></div>
<div style="left:706.7px;top:62.3px;width:38.3px;height:24.2px;background:#f0f0f0;border-top:1px solid #fff;border-left:1px solid #fff;border-right:2px solid #848484;"></div>
<svg width="800" height="100" viewBox="0 0 800 100" style="position:absolute;left:0;top:0"><polygon points="344.3,71.5 349.90000000000003,67.7 361.20000000000005,67.7 355.6,71.5" fill="#fff"/><g fill="none" stroke="#00ff00" stroke-width="1.3" stroke-linejoin="round"><rect x="344.3" y="71.5" width="11.300000000000011" height="10.0"/><path d="M344.3 71.5 L349.90000000000003 67.7 H361.20000000000005 L355.6 71.5 M361.20000000000005 67.7 V77.7 L355.6 81.5"/></g><text x="363.1" y="75.4" font-family="Liberation Sans, sans-serif" font-weight="bold" font-size="8.9" fill="#00ff00" stroke="#00ff00" stroke-width="0.25" text-anchor="start" textLength="10.2" lengthAdjust="spacingAndGlyphs">XY</text><polygon points="396.40000000000003,71.5 402.00000000000006,67.7 402.00000000000006,77.7 396.40000000000003,81.5" fill="#fff"/><g fill="none" stroke="#00ff00" stroke-width="1.3" stroke-linejoin="round"><rect x="385.1" y="71.5" width="11.300000000000011" height="10.0"/><path d="M385.1 71.5 L390.70000000000005 67.7 H402.00000000000006 L396.40000000000003 71.5 M402.00000000000006 67.7 V77.7 L396.40000000000003 81.5"/></g><text x="403.90000000000003" y="75.4" font-family="Liberation Sans, sans-serif" font-weight="bold" font-size="8.9" fill="#00ff00" stroke="#00ff00" stroke-width="0.25" text-anchor="start" textLength="10.2" lengthAdjust="spacingAndGlyphs">YZ</text><rect x="425.9" y="71.5" width="11.300000000000068" height="10.0" fill="#fff"/><g fill="none" stroke="#00ff00" stroke-width="1.3" stroke-linejoin="round"><rect x="425.9" y="71.5" width="11.300000000000068" height="10.0"/><path d="M425.9 71.5 L431.5 67.7 H442.80000000000007 L437.20000000000005 71.5 M442.80000000000007 67.7 V77.7 L437.20000000000005 81.5"/></g><text x="444.70000000000005" y="75.4" font-family="Liberation Sans, sans-serif" font-weight="bold" font-size="8.9" fill="#00ff00" stroke="#00ff00" stroke-width="0.25" text-anchor="start" textLength="10.2" lengthAdjust="spacingAndGlyphs">XZ</text><path d="M479.6 71.2 A6.5 6.5 0 1 0 480 77.6" fill="none" stroke="#00ff00" stroke-width="1.9"/><polygon points="477.2,72.6 481.9,69.2 481.9,74.2" fill="#00ff00"/><text x="483.5" y="81.7" font-family="Liberation Sans, sans-serif" font-weight="bold" font-size="8.4" fill="#00ff00" stroke="#00ff00" stroke-width="0.25" text-anchor="start" textLength="10.4" lengthAdjust="spacingAndGlyphs">XY</text><path d="M505.8 66.9 L517.2 75.4 M515.3 66.9 L506.8 76" stroke="#ff0000" stroke-width="2.3" fill="none" stroke-linecap="round"/><text x="510.9" y="82.5" font-family="Liberation Sans, sans-serif" font-weight="bold" font-size="8.9" fill="#00ff00" stroke="#00ff00" stroke-width="0.25" text-anchor="start" textLength="26.2" lengthAdjust="spacingAndGlyphs">CLEAR</text><path d="M561.4 68 V77.6 H574 M561.4 77.6 L556 83" fill="none" stroke="#00ff00" stroke-width="1.5"/><path d="M559.2 69.8 L561.4 67.3 L563.6 69.8 M572.6 75.5 L575 77.6 L572.6 79.7" fill="none" stroke="#00ff00" stroke-width="1.3"/><polygon points="555.2,79.6 555.2,83.8 559.4,83.8" fill="#00ff00"/><text x="553.1" y="73.9" font-family="Liberation Sans, sans-serif" font-weight="bold" font-size="9.4" fill="#00ff00" stroke="#00ff00" stroke-width="0.25" text-anchor="start" textLength="4.9" lengthAdjust="spacingAndGlyphs">Y</text><text x="573.8" y="75.4" font-family="Liberation Sans, sans-serif" font-weight="bold" font-size="8.9" fill="#00ff00" stroke="#00ff00" stroke-width="0.25" text-anchor="start" textLength="4.9" lengthAdjust="spacingAndGlyphs">X</text><text x="548.6" y="83.9" font-family="Liberation Sans, sans-serif" font-weight="bold" font-size="10.8" fill="#00ff00" stroke="#00ff00" stroke-width="0.25" text-anchor="start" textLength="5.6" lengthAdjust="spacingAndGlyphs">Z</text><g fill="none" stroke="#00ff00" stroke-width="1.3" stroke-dasharray="1.2 1.1" stroke-linejoin="round"><rect x="589.2" y="72.4" width="10.599999999999909" height="9.699999999999989"/><path d="M589.2 72.4 L595.5 68.80000000000001 H606.0999999999999 L599.8 72.4 M606.0999999999999 68.80000000000001 V78.5 L599.8 82.1"/></g><text x="607.8" y="74.2" font-family="Liberation Sans, sans-serif" font-weight="bold" font-size="8.3" fill="#00ff00" stroke="#00ff00" stroke-width="0.25" text-anchor="start" textLength="4.8" lengthAdjust="spacingAndGlyphs">B</text><text x="611.9" y="78.8" font-family="Liberation Sans, sans-serif" font-weight="bold" font-size="6.5" fill="#00ff00" stroke="#00ff00" stroke-width="0.25" text-anchor="start" textLength="4.5" lengthAdjust="spacingAndGlyphs">O</text><g transform="rotate(90 617 81.5)"><text x="614.6" y="83.6" font-family="Liberation Sans, sans-serif" font-weight="bold" font-size="6.6" fill="#00ff00" stroke="#00ff00" stroke-width="0.25" text-anchor="start" textLength="4.9" lengthAdjust="spacingAndGlyphs">X</text></g><path d="M630.2 67.6 H637.5 V79.5 L633.85 82.6 L630.2 79.5 Z" fill="#00ff00"/><text x="638.8" y="73.9" font-family="Liberation Sans, sans-serif" font-weight="bold" font-size="8.3" fill="#00ff00" stroke="#00ff00" stroke-width="0.25" text-anchor="start" textLength="21.3" lengthAdjust="spacingAndGlyphs">TOOL</text><g fill="none" stroke="#00ff00" stroke-width="1.3" stroke-linejoin="round"><rect x="670" y="70.6" width="11.200000000000045" height="9.300000000000011"/><path d="M670 70.6 L676.3 66.69999999999999 H687.5 L681.2 70.6 M687.5 66.69999999999999 V76.0 L681.2 79.9"/></g><text x="689.6" y="73.1" font-family="Liberation Sans, sans-serif" font-weight="bold" font-size="6.6" fill="#00ff00" stroke="#00ff00" stroke-width="0.25" text-anchor="start" textLength="10.5" lengthAdjust="spacingAndGlyphs">OR</text><text x="687.8" y="82.5" font-family="Liberation Sans, sans-serif" font-weight="bold" font-size="6.6" fill="#00ff00" stroke="#00ff00" stroke-width="0.25" text-anchor="start" textLength="13.5" lengthAdjust="spacingAndGlyphs">THO</text><text x="710.9" y="72.8" font-family="Liberation Sans, sans-serif" font-weight="bold" font-size="8.2" fill="#00ff00" stroke="#00ff00" stroke-width="0.25" text-anchor="start" textLength="29.2" lengthAdjust="spacingAndGlyphs">Viewer</text><text x="712.8" y="80.6" font-family="Liberation Sans, sans-serif" font-weight="bold" font-size="8.2" fill="#00ff00" stroke="#00ff00" stroke-width="0.25" text-anchor="start" textLength="25.1" lengthAdjust="spacingAndGlyphs">Setup</text></svg>
<div style="left:339.5px;top:85.4px;width:406.5px;height:1px;background:#fbfbfb;"></div>
<svg width="405.5" height="460.7" viewBox="0 0 405.5 460.7" style="position:absolute;left:340px;top:86px;background:#003200"><polyline points="42.2,66.1 373.7,0.5" fill="none" stroke="#838b83" stroke-width="0.8"/><polyline points="42.2,66.1 229.5,108.0" fill="none" stroke="#838b83" stroke-width="0.8"/><polyline points="229.5,108.0 405.5,89.5" fill="none" stroke="#838b83" stroke-width="0.8"/><polyline points="42.2,66.1 50.0,405.3" fill="none" stroke="#838b83" stroke-width="0.8"/><polyline points="229.5,108.0 228.2,335.0" fill="none" stroke="#838b83" stroke-width="0.8"/><polyline points="50.0,405.3 228.2,335.0" fill="none" stroke="#838b83" stroke-width="0.8"/><polyline points="50.0,405.3 213.0,461.0" fill="none" stroke="#838b83" stroke-width="0.8"/><polyline points="228.2,335.0 405.5,366.4" fill="none" stroke="#838b83" stroke-width="0.8"/><polyline points="398.4,0.5 387.7,461.0" fill="none" stroke="#838b83" stroke-width="0.8"/><polygon points="220.5,221.3 264.8,217.8 274.3,219.1 281.8,223.2 286.6,229.3 288.4,237.2 286.6,245.6 279.8,253.8 271.6,257.2 220.5,265.4" fill="#666666"/><polygon points="220.5,221.3 264.8,217.8 274.3,219.1 279.0,222.0 220.5,230.0" fill="#5a5a5a"/><polygon points="220.5,230.0 279.0,222.0 281.8,224.5 220.5,238.2" fill="#737373"/><polygon points="220.5,238.2 281.8,224.5 285.6,234.5 220.5,248.3" fill="#6b6b6b"/><polygon points="220.5,248.3 285.6,234.5 284.5,242.4 220.5,257.9" fill="#646464"/><polygon points="220.5,257.9 284.5,242.4 279.8,253.8 271.6,257.2 220.5,265.4" fill="#585858"/><polygon points="220.5,264.2 271.6,256.2 279.8,253.2 279.8,253.8 271.6,257.2 220.5,265.4" fill="#444444"/><polygon points="281.8,224.5 286.6,229.3 288.4,237.2 285.6,234.5" fill="#7a7a7a"/><polygon points="285.6,234.5 288.4,237.2 286.6,245.6 284.5,242.4" fill="#707070"/><polygon points="172.0,95.4 181.8,92.3 201.4,91.5 218.0,93.9 221.3,97.4 220.8,392.8 216.8,398.7 196.6,403.1 182.3,401.7 172.6,395.7" fill="#818181"/><polygon points="172.0,95.4 181.8,92.3 182.3,401.7 172.6,395.7" fill="#5b5b5b"/><polygon points="201.4,91.5 218.0,93.9 216.8,398.7 200.2,402.6" fill="#7d7d7d"/><polygon points="200.6,91.5 202.0,91.5 200.8,402.6 199.6,402.6" fill="#8a8a8a"/><polygon points="218.0,93.9 221.3,97.4 220.8,392.8 216.8,398.7" fill="#525252"/><polygon points="85.2,232.3 160.0,225.6 177.8,224.3 199.2,231.6 207.6,238.1 209.3,241.7 216.5,249.2 201.0,267.9 190.0,271.6 172.0,278.0 130.0,286.2 86.7,294.0 69.9,284.3 63.8,261.8 69.0,240.4" fill="#676767"/><polygon points="85.2,232.3 160.0,225.6 177.8,224.3 199.2,231.6 101.2,243.4" fill="#676767"/><polygon points="152.0,233.6 160.0,231.1 177.8,228.2 199.2,231.6 160.0,236.4" fill="#626262"/><polygon points="101.2,243.4 199.2,231.6 207.6,238.1 209.3,241.7 107.8,266.7" fill="#757575"/><polygon points="107.8,266.7 209.3,241.7 216.5,249.2 103.5,284.0" fill="#666666"/><polygon points="103.5,284.0 216.5,249.2 201.0,267.9 190.0,268.5 172.0,274.0 130.0,282.1 102.8,287.3" fill="#5c5c5c"/><polygon points="102.8,287.3 130.0,282.1 172.0,274.0 190.0,268.5 201.0,267.9 190.0,271.6 172.0,278.0 130.0,286.2 86.7,294.0" fill="#414141"/><polygon points="85.2,232.3 101.2,243.4 107.8,266.7 102.8,287.3 86.7,294.0 69.9,284.3 63.8,261.8 69.0,240.4" fill="#616161"/><polyline points="278.2,220.5 278.2,207.0" fill="none" stroke="#e6dc2c" stroke-width="1.3"/><polygon points="278.2,201.0 281.1,208.4 275.3,208.4" fill="#e6dc2c"/><polyline points="288.6,237.2 303.5,237.8" fill="none" stroke="#e6dc2c" stroke-width="1.3"/><polygon points="310.9,237.9 302.9,241.0 302.9,234.8" fill="#e6dc2c"/><text x="270.5" y="211" font-family="Liberation Sans, sans-serif" font-size="10.5" fill="#e6dc2c" stroke="#e6dc2c" stroke-width="0.35" text-anchor="middle" textLength="6.2" lengthAdjust="spacingAndGlyphs">Y</text><text x="307.5" y="232.89999999999998" font-family="Liberation Sans, sans-serif" font-size="8" fill="#e6dc2c" stroke="#e6dc2c" stroke-width="0.3" text-anchor="middle" textLength="6.2" lengthAdjust="spacingAndGlyphs">X</text></svg>
<div class="t" style="left:756.5px;top:148.3px;line-height:12px;font-size:9.88px;color:#000;transform-origin:0 50%;transform:scaleX(0.85);">File:</div>
<div class="r" style="left:756.5px;top:166.7px"></div>
<div class="t" style="left:769.5px;top:167.10000000000002px;line-height:12px;font-size:9.88px;color:#000;transform-origin:0 50%;transform:scaleX(0.85);">1</div>
<div class="r" style="left:756.5px;top:181.89999999999998px"><i></i></div>
<div class="t" style="left:769.5px;top:182.3px;line-height:12px;font-size:9.88px;color:#000;transform-origin:0 50%;transform:scaleX(0.85);">2</div>
<div class="r" style="left:756.5px;top:196.7px"></div>
<div class="t" style="left:769.5px;top:197.10000000000002px;line-height:12px;font-size:9.88px;color:#000;transform-origin:0 50%;transform:scaleX(0.85);">3</div>
<div class="r" style="left:756.5px;top:211.2px"></div>
<div class="t" style="left:769.5px;top:211.60000000000002px;line-height:12px;font-size:9.88px;color:#000;transform-origin:0 50%;transform:scaleX(0.85);">4</div>
<div class="r" style="left:756.5px;top:226.7px"></div>
<div class="t" style="left:769.5px;top:227.10000000000002px;line-height:12px;font-size:9.88px;color:#000;transform-origin:0 50%;transform:scaleX(0.85);">5</div>
<div class="r" style="left:756.5px;top:241.5px"></div>
<div class="t" style="left:769.5px;top:241.90000000000003px;line-height:12px;font-size:9.88px;color:#000;transform-origin:0 50%;transform:scaleX(0.85);">6</div>
<div class="r" style="left:756.5px;top:256.7px"></div>
<div class="t" style="left:769.5px;top:257.1px;line-height:12px;font-size:9.88px;color:#000;transform-origin:0 50%;transform:scaleX(0.85);">7</div>
<div class="t" style="left:667px;width:200px;text-align:center;top:288.8px;line-height:12px;font-size:9.88px;color:#000;transform-origin:50% 50%;transform:scaleX(0.85);">Simulate</div>
<div class="c" style="left:762.7px;top:304.3px"></div>
<div class="b" style="left:752.4px;top:320.5px;width:32.5px;height:14px;line-height:15.2px;font-size:9.88px;"><span class="s">run</span></div>
<div class="t" style="left:670px;width:200px;text-align:center;top:358.5px;line-height:12px;font-size:9.88px;color:#000;transform-origin:50% 50%;transform:scaleX(0.85);">Block</div>
<div class="t" style="left:670px;width:200px;text-align:center;top:371.6px;line-height:12px;font-size:9.88px;color:#000;transform-origin:50% 50%;transform:scaleX(0.85);">Delete</div>
<div class="c" style="left:763.2px;top:389.3px"><svg width="9" height="9" viewBox="0 0 9 9" style="position:absolute;left:0;top:0"><path d="M1.6 4.2 L3.6 6.4 L7.6 1.8" stroke="#000" stroke-width="1.6" fill="none"/></svg></div>
<div class="b" style="left:759px;top:433.5px;width:27.8px;height:18.5px;line-height:20.1px;font-size:9.88px;"><span class="s">Help</span></div>
<div class="b" style="left:357.3px;top:554.6px;width:381px;height:16.2px;line-height:16.2px;font-size:9.88px;text-align:left;padding-left:1.6px;background:#fff;"><span class="sl">G10L2P1X2Y3Z0</span><svg width="8" height="5" viewBox="0 0 8 5" style="position:absolute;right:2.6px;top:4.8px"><path d="M0.7 0.7 L4 4 L7.3 0.7" fill="none" stroke="#3c3c3c" stroke-width="1"/></svg></div>
<div class="b" style="left:747px;top:553px;width:28px;height:18px;line-height:19.6px;font-size:9.88px;border:2px solid #0078d7;line-height:16px;"><span class="s">Send</span></div>
<div style="left:0px;top:0px;width:800px;height:0.8px;background:#9a9a9a;"></div>
<div style="left:0px;top:0px;width:1px;height:589px;background:#b0b0b0;"></div>
<div style="left:798.8px;top:0px;width:1.2px;height:589px;background:#a0a0a0;"></div>
<div style="left:0px;top:587.6px;width:800px;height:1.4px;background:#a8a8a8;"></div>
</div></body></html>
